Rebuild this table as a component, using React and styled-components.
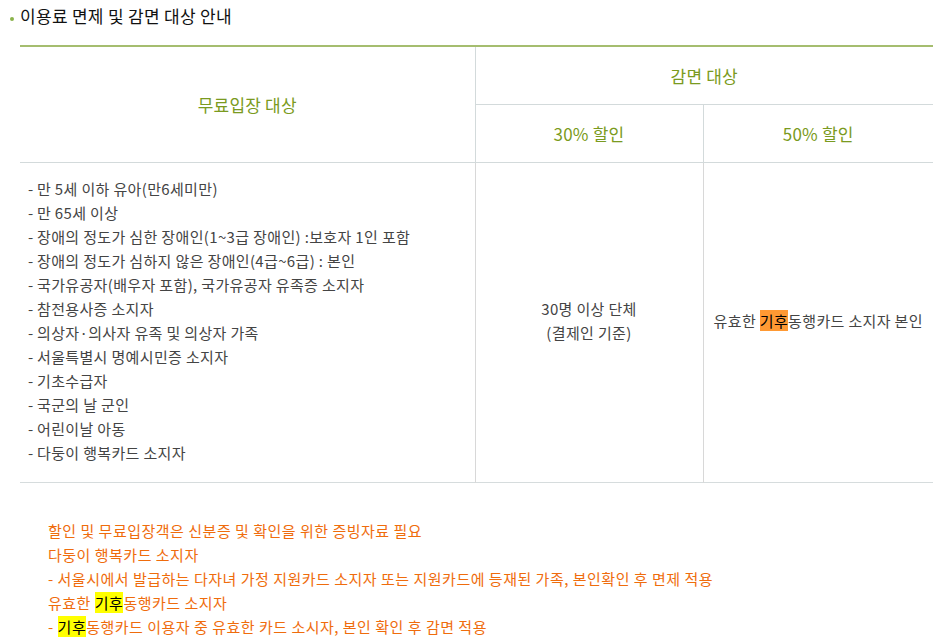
import styled, { createGlobalStyle } from "styled-components";

const GlobalStyle = createGlobalStyle`
	body {
		margin: 0;
		background: #ffffff;
		font-family: "Noto Sans CJK KR", "Noto Sans", sans-serif;
	}
`;

const freeList = [
	"만 5세 이하 유아(만6세미만)",
	"만 65세 이상",
	"장애의 정도가 심한 장애인(1~3급 장애인) :보호자 1인 포함",
	"장애의 정도가 심하지 않은 장애인(4급~6급) : 본인",
	"국가유공자(배우자 포함), 국가유공자 유족증 소지자",
	"참전용사증 소지자",
	"의상자·의사자 유족 및 의상자 가족",
	"서울특별시 명예시민증 소지자",
	"기초수급자",
	"국군의 날 군인",
	"어린이날 아동",
	"다둥이 행복카드 소지자",
];

const App = () => {
	return (
		<Page>
			<GlobalStyle />
			<Title>이용료 면제 및 감면 대상 안내</Title>
			<Table>
				<colgroup>
					<col style={{ width: "455px" }} />
					<col style={{ width: "228px" }} />
					<col />
				</colgroup>
				<thead>
					<tr>
						<Head rowSpan={2}>무료입장 대상</Head>
						<Head colSpan={2}>감면 대상</Head>
					</tr>
					<tr>
						<Head>30% 할인</Head>
						<Head>50% 할인</Head>
					</tr>
				</thead>
				<tbody>
					<tr>
						<Cell $left>
							<FreeList>
								{freeList.map((item) => (
									<li key={item}>
										<Dash>-</Dash>
										{item}
									</li>
								))}
							</FreeList>
						</Cell>
						<Cell>
							30명 이상 단체
							<br />
							(결제인 기준)
						</Cell>
						<Cell>
							유효한 <Mark $color="#ff9933">기후</Mark>동행카드 소지자 본인
						</Cell>
					</tr>
				</tbody>
			</Table>
			<Notes>
				<p>할인 및 무료입장객은 신분증 및 확인을 위한 증빙자료 필요</p>
				<p>다둥이 행복카드 소지자</p>
				<p>- 서울시에서 발급하는 다자녀 가정 지원카드 소지자 또는 지원카드에 등재된 가족, 본인확인 후 면제 적용</p>
				<p>
					유효한 <Mark $color="#ffff00">기후</Mark>동행카드 소지자
				</p>
				<p>
					- <Mark $color="#ffff00">기후</Mark>동행카드 이용자 중 유효한 카드 소시자, 본인 확인 후 감면 적용
				</p>
			</Notes>
		</Page>
	);
};

const Page = styled.div`
	padding: 4px 8px 0 20px;
`;

const Title = styled.h3`
	position: relative;
	margin: 0 0 17px;
	font-size: 17px;
	font-weight: 400;
	letter-spacing: 0.3px;
	line-height: 24px;
	color: #111;

	&::before {
		content: "";
		position: absolute;
		left: -10px;
		top: 13px;
		width: 4px;
		height: 4px;
		border-radius: 50%;
		background: #8ab34a;
	}
`;

const Table = styled.table`
	width: 913px;
	border-collapse: collapse;
	table-layout: fixed;
	border-top: 2px solid #a5bd6f;
	border-bottom: 1px solid #d6dcdd;
`;

const Head = styled.th`
	height: 57px;
	padding: 0;
	font-size: 17px;
	font-weight: 400;
	letter-spacing: 0.2px;
	color: #7a9a20;
	text-align: center;
	border: 1px solid #d3dadb;
	border-top: none;

	&:first-child {
		border-left: none;
	}
	&:last-child {
		border-right: none;
	}
`;

const Cell = styled.td`
	padding: 14px 8px 17px;
	font-size: 15px;
	letter-spacing: 0.35px;
	line-height: 24px;
	color: #444;
	text-align: ${(p) => (p.$left ? "left" : "center")};
	vertical-align: middle;
	border-left: 1px solid #d8d8d8;

	&:first-child {
		border-left: none;
	}
`;

const FreeList = styled.ul`
	margin: 0;
	padding: 0;
	list-style: none;
`;

const Dash = styled.span`
	display: inline-block;
	width: 9px;
`;

const Mark = styled.span`
	background: ${(p) => p.$color};
	color: #000;
`;

const Notes = styled.div`
	padding: 36px 0 0 28px;

	p {
		margin: 0;
		font-size: 15px;
		letter-spacing: 0.5px;
		line-height: 24px;
		color: #ef6c0c;
	}
`;

export default App;
